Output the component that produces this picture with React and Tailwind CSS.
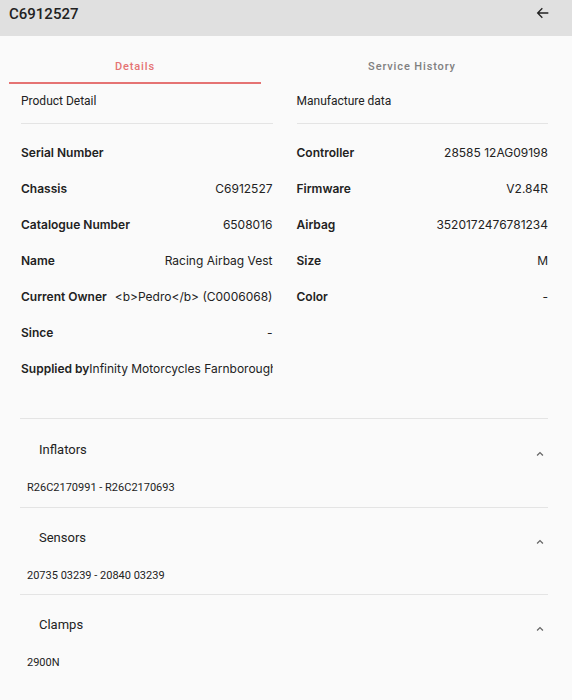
import React from "react";

const left = [
  ["Serial Number", ""],
  ["Chassis", "C6912527"],
  ["Catalogue Number", "6508016"],
  ["Name", "Racing Airbag Vest"],
  ["Current Owner", "<b>Pedro</b> (C0006068)"],
  ["Since", "-"],
];

const right = [
  ["Controller", "28585 12AG09198"],
  ["Firmware", "V2.84R"],
  ["Airbag", "3520172476781234"],
  ["Size", "M"],
  ["Color", "-"],
];

const sections = [
  ["Inflators", "R26C2170991 - R26C2170693"],
  ["Sensors", "20735 03239 - 20840 03239"],
  ["Clamps", "2900N"],
];

const Row = ({ label, value }) => (
  <div className="flex h-[36px] items-center justify-between text-[12px] text-[#222]">
    <span className="font-semibold">{label}</span>
    <span>{value}</span>
  </div>
);

const ChevronUp = () => (
  <svg width="14" height="14" viewBox="0 0 24 24" fill="none" stroke="#666" strokeWidth="2.2">
    <path d="M7 14.5l5-5 5 5" />
  </svg>
);

export default function App() {
  return (
    <div className="min-h-[700px] bg-[#fafafa] font-['Roboto',sans-serif]">
      <header className="flex h-[36px] items-start justify-between bg-[#e0e0e0] pl-[9px] pr-[21px] pt-[3px]">
        <h1 className="text-[15px] font-medium text-[#222]">C6912527</h1>
        <svg className="mt-[2px]" width="16" height="16" viewBox="0 0 24 24" fill="none" stroke="#222" strokeWidth="2">
          <path d="M20 12H4M11 5l-7 7 7 7" />
        </svg>
      </header>

      <div className="flex px-[9px]">
        <div className="flex h-[48px] w-[252px] items-end justify-center border-b-2 border-[#e57373] pb-[7px] text-[11px] font-medium tracking-[0.08em] text-[#e57373]">
          Details
        </div>
        <div className="flex h-[48px] flex-1 items-end justify-center pb-[9px] text-[11px] font-medium tracking-[0.08em] text-[#808080]">
          Service History
        </div>
      </div>

      <div className="grid grid-cols-2 gap-[24px] pl-[21px] pr-[24px]">
        <div>
          <div className="h-[40px] border-b border-[#e4e4e4] pt-[8px] text-[12px] text-[#222]">
            Product Detail
          </div>
          <div className="mt-[11px] font-['Inter',sans-serif]">
            {left.map(([l, v]) => (
              <Row key={l} label={l} value={v} />
            ))}
            <div className="flex h-[36px] items-center overflow-hidden whitespace-nowrap text-[12px] text-[#222]">
              <span className="font-semibold">Supplied by</span>
              <span>Infinity Motorcycles Farnborough</span>
            </div>
          </div>
        </div>
        <div>
          <div className="h-[40px] border-b border-[#e4e4e4] pt-[8px] text-[12px] text-[#222]">
            Manufacture data
          </div>
          <div className="mt-[11px] font-['Inter',sans-serif]">
            {right.map(([l, v]) => (
              <Row key={l} label={l} value={v} />
            ))}
          </div>
        </div>
      </div>

      <div className="ml-[20px] mr-[24px] mt-[31px] border-t border-[#e4e4e4]">
        {sections.map(([title, value], i) => (
          <div key={title} className={i < sections.length - 1 ? "border-b border-[#e4e4e4]" : ""}>
            <div
              className={`flex items-center justify-between pl-[19px] pr-[1px] ${
                i === 0 ? "pt-[20px]" : "pt-[19px]"
              }`}
            >
              <span className="text-[13px] text-[#222]">{title}</span>
              <span className="mt-[8px]">
                <ChevronUp />
              </span>
            </div>
            <div className="pb-[10px] pl-[7px] pt-[19px] text-[11px] text-[#222]">{value}</div>
          </div>
        ))}
      </div>
    </div>
  );
}
